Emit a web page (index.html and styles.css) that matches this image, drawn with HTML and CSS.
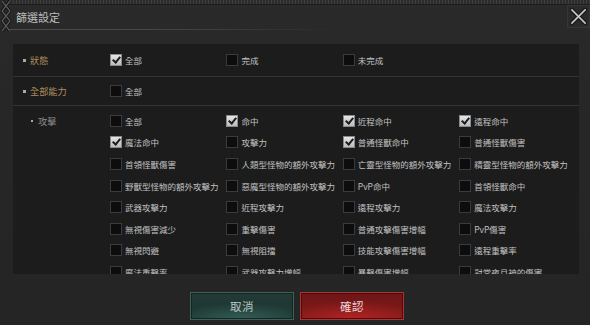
FILE: index.html
```html
<!DOCTYPE html>
<html lang="zh-Hant">
<head>
    <meta charset="UTF-8">
    <meta name="viewport" content="width=device-width, initial-scale=1.0">
    <title>篩選設定</title>
    <link rel="stylesheet" href="styles.css">
</head>
<body>
    <div class="dialog">
        <div class="top-strip"></div>
        <svg class="braid" width="12" height="32" viewBox="0 0 12 32">
            <path d="M2 1 L10 11 M10 1 L2 11 M2 11 L10 21 M10 11 L2 21 M2 21 L10 31 M10 21 L2 31" stroke="#111" stroke-width="3" fill="none"/>
            <path d="M2 1 L10 11 M10 1 L2 11 M2 11 L10 21 M10 11 L2 21 M2 21 L10 31 M10 21 L2 31" stroke="#5a5a5a" stroke-width="1.3" fill="none"/>
        </svg>

        <div class="header">
            <h1 class="title">篩選設定</h1>
            <div class="title-line"></div>
        </div>

        <button class="close-btn" type="button" aria-label="close">
            <svg width="17" height="17" viewBox="0 0 18 18">
                <path d="M2 2 L16 16 M16 2 L2 16" stroke="#151515" stroke-width="4.5" stroke-linecap="round"/>
                <path d="M2 2 L16 16 M16 2 L2 16" stroke="#a8a8a8" stroke-width="2.2" stroke-linecap="round"/>
                <path d="M2.5 2.5 L16 16 M16 2 L2.5 15.5" stroke="#dedede" stroke-width="0.7" stroke-linecap="round"/>
            </svg>
        </button>

        <div class="panel">
            <div class="filter-row row-state">
                <div class="row-label main"><span class="bullet square"></span>狀態</div>
                <div class="options">
                    <label class="opt"><span class="box checked"></span>全部</label>
                    <label class="opt"><span class="box"></span>完成</label>
                    <label class="opt"><span class="box"></span>未完成</label>
                </div>
            </div>

            <div class="filter-row row-ability">
                <div class="row-label main"><span class="bullet square"></span>全部能力</div>
                <div class="options">
                    <label class="opt"><span class="box"></span>全部</label>
                </div>
            </div>

            <div class="filter-row row-attack">
                <div class="row-label sub"><span class="bullet dot"></span>攻擊</div>
                <div class="options grid" id="attackGrid"></div>
            </div>
        </div>

        <div class="footer">
            <button class="btn btn-cancel" type="button">取消</button>
            <button class="btn btn-confirm" type="button">確認</button>
        </div>
    </div>

    <script>
        // Attack stats, row by row
        const attackOptions = [
            ['全部', false], ['命中', true], ['近程命中', true], ['遠程命中', true],
            ['魔法命中', true], ['攻擊力', false], ['普通怪獸命中', true], ['普通怪獸傷害', false],
            ['首領怪獸傷害', false], ['人類型怪物的額外攻擊力', false], ['亡靈型怪物的額外攻擊力', false], ['精靈型怪物的額外攻擊力', false],
            ['野獸型怪物的額外攻擊力', false], ['惡魔型怪物的額外攻擊力', false], ['PvP命中', false], ['首領怪獸命中', false],
            ['武器攻擊力', false], ['近程攻擊力', false], ['遠程攻擊力', false], ['魔法攻擊力', false],
            ['無視傷害減少', false], ['重擊傷害', false], ['普通攻擊傷害增幅', false], ['PvP傷害', false],
            ['無視閃避', false], ['無視阻擋', false], ['技能攻擊傷害增幅', false], ['遠程重擊率', false],
            ['魔法重擊率', false], ['武器攻擊力增幅', false], ['暴擊傷害增幅', false], ['對常夜月神的傷害', false]
        ];

        const grid = document.getElementById('attackGrid');
        attackOptions.forEach(function(item) {
            const opt = document.createElement('label');
            opt.className = 'opt';
            const box = document.createElement('span');
            box.className = item[1] ? 'box checked' : 'box';
            opt.appendChild(box);
            opt.appendChild(document.createTextNode(item[0]));
            grid.appendChild(opt);
        });
    </script>
</body>
</html>
```

FILE: styles.css
```css
* {
    margin: 0;
    padding: 0;
    box-sizing: border-box;
}

body {
    font-family: "Noto Sans CJK TC", "Noto Sans", sans-serif;
    background: #262626;
    width: 590px;
    height: 325px;
    overflow: hidden;
}

.dialog {
    position: relative;
    width: 590px;
    height: 325px;
    background: linear-gradient(180deg, #2a2a2a 0%, #262626 40%, #252525 100%);
}

.top-strip {
    height: 5px;
    margin-left: 10px;
    background:
        repeating-linear-gradient(90deg, #3e3e3e 0 1px, #2c2c2c 1px 3px),
        #333;
    border-bottom: 1px solid #1c1c1c;
}

.braid {
    position: absolute;
    left: 0;
    top: 0;
}

.header {
    height: 39px;
    padding-left: 16px;
    position: relative;
}

.title {
    font-size: 11px;
    font-weight: 400;
    color: #bdbdbd;
    line-height: 22px;
    padding-top: 1px;
}

.title-line {
    position: absolute;
    left: 10px;
    top: 24px;
    width: 330px;
    height: 1px;
    background: linear-gradient(90deg, #4c4c4c 0%, #444 50%, rgba(68, 68, 68, 0) 100%);
}

.close-btn {
    position: absolute;
    right: 0;
    top: 5px;
    width: 23px;
    height: 23px;
    display: flex;
    align-items: center;
    justify-content: center;
    background: #2b2b2b;
    border: 1px solid #363636;
    cursor: pointer;
}

.panel {
    margin-left: 13px;
    width: 566px;
    height: 230px;
    background: #1c1c1c;
    overflow: hidden;
}

.filter-row {
    display: flex;
}

.row-state {
    height: 33px;
    align-items: center;
    border-bottom: 1px solid #343434;
}

.row-ability {
    height: 29px;
    align-items: center;
    border-bottom: 1px solid #343434;
}

.row-attack {
    padding-top: 4px;
    align-items: flex-start;
}

.row-label {
    width: 97px;
    flex-shrink: 0;
    display: flex;
    align-items: center;
    font-size: 9.2px;
}

.row-label.main {
    padding-left: 10px;
    color: #ad8d5c;
}

.row-attack .row-label {
    height: 21.6px;
}

.row-label.sub {
    padding-left: 18px;
    color: #8e8e8e;
}

.bullet {
    display: inline-block;
    background: #a8a8a8;
    margin-right: 4px;
}

.bullet.square {
    width: 3px;
    height: 3px;
}

.bullet.dot {
    width: 2px;
    height: 2px;
    margin-right: 5px;
}

.options {
    display: grid;
    grid-template-columns: repeat(4, 116.4px);
}

.options.grid {
    grid-auto-rows: 21.6px;
}

.opt {
    display: flex;
    align-items: center;
    font-size: 8.5px;
    color: #c2c2c2;
    white-space: nowrap;
}

.box {
    width: 12px;
    height: 12px;
    margin-right: 3px;
    flex-shrink: 0;
    background: #0d0d0d;
    border: 1px solid #3b3b3b;
    position: relative;
}

.box.checked {
    background: linear-gradient(180deg, #e6e6e6 0%, #bcbcbc 100%);
    border-color: #8a8a8a;
}

.box.checked::after {
    content: '';
    position: absolute;
    left: 3px;
    top: 0px;
    width: 3px;
    height: 6px;
    border-right: 2px solid #1c1c1c;
    border-bottom: 2px solid #1c1c1c;
    transform: rotate(40deg);
}

.footer {
    display: flex;
    gap: 6px;
    padding-left: 190px;
    padding-top: 18px;
}

.btn {
    width: 104px;
    height: 28px;
    font-family: "Noto Sans CJK TC", sans-serif;
    font-size: 11.5px;
    letter-spacing: 0.5px;
    cursor: pointer;
}

.btn-cancel {
    color: #bcc8c4;
    border: 1px solid #3b625a;
    background:
        radial-gradient(ellipse 70% 60% at 50% 100%, rgba(70, 130, 118, 0.55) 0%, rgba(70, 130, 118, 0) 100%),
        linear-gradient(180deg, #223b37 0%, #1d3430 100%);
    box-shadow: inset 0 0 0 1px #16261f;
}

.btn-confirm {
    color: #ead6d6;
    border: 1px solid #a83434;
    background:
        radial-gradient(ellipse 70% 70% at 50% 100%, rgba(200, 40, 40, 0.7) 0%, rgba(200, 40, 40, 0) 100%),
        linear-gradient(180deg, #6e1616 0%, #801a1a 100%);
    box-shadow: inset 0 0 0 1px #4a0c0c;
}
```
